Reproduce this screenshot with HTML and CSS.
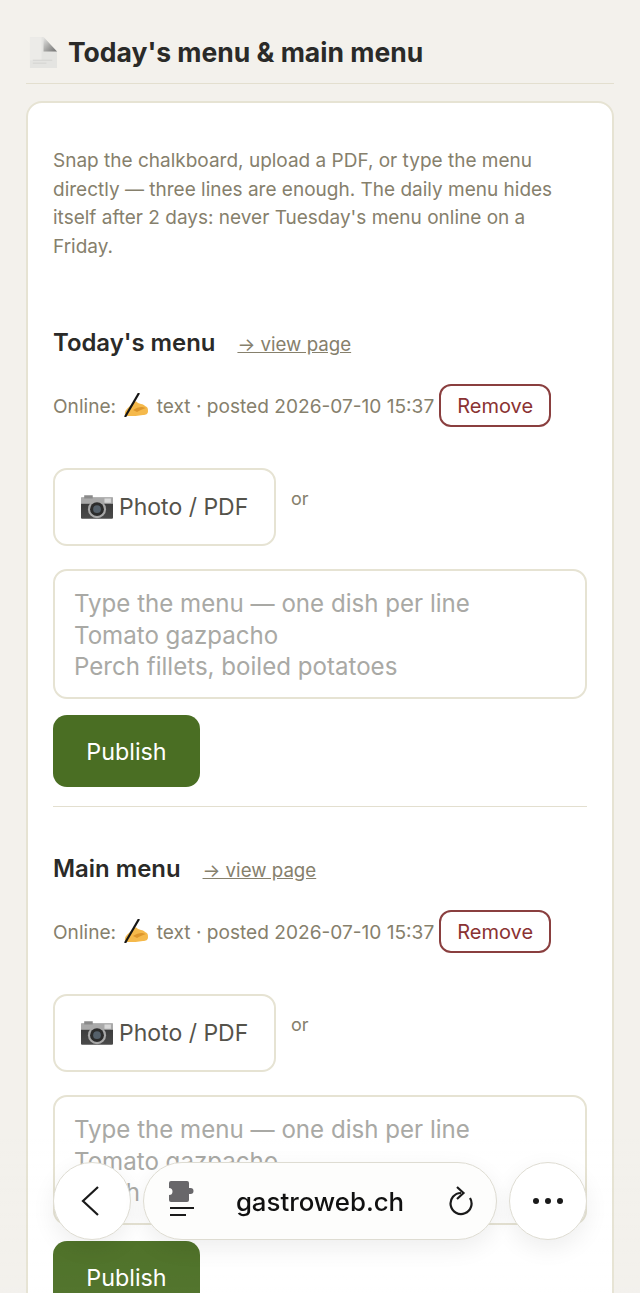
FILE: index.html
```html
<!DOCTYPE html>
<html lang="en">
<head>
  <meta charset="UTF-8">
  <meta name="viewport" content="width=device-width, initial-scale=1.0">
  <title>Today's menu &amp; main menu</title>
  <link rel="stylesheet" href="styles.css">
</head>
<body>

  <svg class="svg-defs" width="0" height="0" aria-hidden="true">
    <defs>
      <linearGradient id="cam-body" x1="0" y1="0" x2="0" y2="1">
        <stop offset="0" stop-color="#8b8b8b"/>
        <stop offset="0.3" stop-color="#3c3c3c"/>
        <stop offset="1" stop-color="#4a4a4a"/>
      </linearGradient>
      <symbol id="camera" viewBox="0 0 30 24">
        <rect x="0" y="3" width="30" height="20" rx="1" fill="url(#cam-body)"/>
        <rect x="0" y="3" width="30" height="6" fill="#a9a9a9"/>
        <rect x="3" y="1" width="8" height="3" fill="#8a8a8a"/>
        <rect x="22" y="4" width="6" height="4" fill="#d8d8d8"/>
        <circle cx="15" cy="14" r="8.5" fill="#a8a8a8"/>
        <circle cx="15" cy="14" r="6.5" fill="#2c2c2c"/>
        <circle cx="15" cy="14" r="3.6" fill="#55606a"/>
      </symbol>
      <symbol id="writing" viewBox="0 0 26 24">
        <path d="M2 20c0-3 3-5 5-7l4-4c2-1 3 0 4 1l3 1c2 0 3 1 4 2 3 1 3 3 3 5 0 3-2 4-5 4-5 1-10 1-14 1-3 0-5-1-4-3z" fill="#f5b94b"/>
        <path d="M10 17c3-2 6-3 9-3l4 1c-3 1-6 2-9 4z" fill="#dd962c"/>
        <path d="M16 0L2 24" stroke="#161616" stroke-width="2.200" fill="none"/>
      </symbol>
    </defs>
  </svg>

  <main class="page">
    <h1 class="page-title">
      <svg class="doc-icon" viewBox="0 0 30 34" aria-hidden="true">
        <defs>
          <linearGradient id="doc-fold" x1="0" y1="0" x2="1" y2="1">
            <stop offset="0" stop-color="#e8e8e6"/>
            <stop offset="0.55" stop-color="#a2a2a0"/>
            <stop offset="1" stop-color="#707070"/>
          </linearGradient>
        </defs>
        <path d="M1 1h14l14 15v17H1z" fill="#e4e4e1"/>
        <path d="M15 1l14 15H15z" fill="url(#doc-fold)"/>
        <path d="M1 1h12v24H1z" fill="#ecebe8"/>
        <path d="M4 28h14M4 25h20" stroke="#d2d2cf" stroke-width="1"/>
      </svg>
      Today's menu &amp; main menu
    </h1>

    <section class="card">
      <p class="intro">Snap the chalkboard, upload a PDF, or type the menu directly — three lines are enough. The daily menu hides itself after 2 days: never Tuesday's menu online on a Friday.</p>

      <div class="menu-block menu-block-first">
        <h2 class="menu-title">Today's menu <a class="view-link" href="#">→ view page</a></h2>
        <div class="status">
          <span>Online: <svg class="emoji-write"><use href="#writing"/></svg> text · posted 2026-07-10 15:37</span>
          <button type="button" class="btn-remove">Remove</button>
        </div>
        <div class="upload-row">
          <label class="btn-upload"><svg class="emoji-cam"><use href="#camera"/></svg> Photo / PDF</label>
          <span class="or">or</span>
        </div>
        <textarea class="menu-text" rows="3" placeholder="Type the menu — one dish per line&#10;Tomato gazpacho&#10;Perch fillets, boiled potatoes"></textarea>
        <button type="button" class="btn-publish">Publish</button>
      </div>

      <div class="menu-block">
        <h2 class="menu-title">Main menu <a class="view-link" href="#">→ view page</a></h2>
        <div class="status">
          <span>Online: <svg class="emoji-write"><use href="#writing"/></svg> text · posted 2026-07-10 15:37</span>
          <button type="button" class="btn-remove">Remove</button>
        </div>
        <div class="upload-row">
          <label class="btn-upload"><svg class="emoji-cam"><use href="#camera"/></svg> Photo / PDF</label>
          <span class="or">or</span>
        </div>
        <textarea class="menu-text" rows="3" placeholder="Type the menu — one dish per line&#10;Tomato gazpacho&#10;Perch fillets, boiled potatoes"></textarea>
        <button type="button" class="btn-publish">Publish</button>
      </div>
    </section>
  </main>

  <div class="fade"></div>

  <nav class="browser-bar">
    <button type="button" class="round-btn" aria-label="Back">
      <svg width="22" height="32" viewBox="0 0 22 32"><path d="M17 2L2 16l15 14" fill="none" stroke="#1a1a1a" stroke-width="2.200"/></svg>
    </button>
    <div class="url-pill">
      <svg class="reader-icon" width="28" height="40" viewBox="0 0 28 40" aria-hidden="true">
        <path d="M0 2a2 2 0 0 1 2-2h16a2 2 0 0 1 2 2v5h1.500a3 3 0 0 1 0 6H20v6a2 2 0 0 1-2 2H2a2 2 0 0 1-2-2v-5a3.500 3.500 0 0 0 0-7z" fill="#68676a"/>
        <path d="M1 27h24" stroke="#1a1a1a" stroke-width="2"/>
        <path d="M1 34h16" stroke="#1a1a1a" stroke-width="2"/>
      </svg>
      <span class="url-text">gastroweb.ch</span>
      <svg class="reload-icon" width="26" height="30" viewBox="0 0 26 30" aria-hidden="true">
        <path d="M12 7A10.500 10.500 0 1 0 21 12" fill="none" stroke="#1a1a1a" stroke-width="2.200"/>
        <path d="M8 1l6.500 6-6.500 6" fill="none" stroke="#1a1a1a" stroke-width="2.200"/>
      </svg>
    </div>
    <button type="button" class="round-btn" aria-label="More">
      <svg width="32" height="8" viewBox="0 0 32 8"><circle cx="4" cy="4" r="3" fill="#1a1a1a"/><circle cx="16" cy="4" r="3" fill="#1a1a1a"/><circle cx="28" cy="4" r="3" fill="#1a1a1a"/></svg>
    </button>
  </nav>

</body>
</html>
```

FILE: styles.css
```css
html, body {
  height: 1293px;
  overflow: hidden;
}

body {
  font-family: 'Inter', 'Liberation Sans', sans-serif;
  background-color: #f3f1ec;
  color: #2a2a28;
  margin: 0;
  padding: 0;
}

.svg-defs {
  display: block;
  height: 0;
}

.page {
  padding: 34px 26px 0;
}

.page-title {
  display: flex;
  align-items: center;
  gap: 10px;
  margin: 0 0 17px;
  padding: 0 0 12px 3px;
  font-size: 26.500px;
  line-height: 37px;
  font-weight: 700;
  border-bottom: 1px solid #e3dfcf;
}

.doc-icon {
  width: 29px;
  height: 33px;
  flex: none;
}

.card {
  background-color: #fff;
  border: 2px solid #e6e3d3;
  border-radius: 16px;
  padding: 44px 25px 60px;
}

.intro {
  margin: 0;
  max-width: 525px;
  font-size: 19px;
  line-height: 28.500px;
  color: #86806c;
}

.menu-block {
  margin-top: 48px;
}

.menu-block-first {
  margin-top: 68px;
  padding-bottom: 19px;
  border-bottom: 1px solid #e3dfcf;
}

.menu-title {
  display: flex;
  align-items: baseline;
  gap: 22px;
  margin: 0;
  font-size: 23.900px;
  line-height: 28px;
  font-weight: 600;
}

.view-link {
  font-size: 18.700px;
  font-weight: 400;
  color: #86806c;
}

.status {
  display: flex;
  align-items: center;
  gap: 5px;
  margin-top: 25px;
  font-size: 19.100px;
  color: #86806c;
  white-space: nowrap;
}

.emoji-write {
  width: 26px;
  height: 24px;
  vertical-align: -4px;
  margin: 0 2px;
}

.btn-remove {
  font-family: inherit;
  font-size: 20px;
  color: #8a3232;
  background-color: #fff;
  border: 2px solid #8a3f3f;
  border-radius: 12px;
  height: 43px;
  padding: 0 16px;
}

.upload-row {
  display: flex;
  align-items: flex-start;
  gap: 15px;
  margin-top: 41px;
}

.btn-upload {
  display: flex;
  align-items: center;
  gap: 6px;
  box-sizing: border-box;
  width: 223px;
  height: 78px;
  padding-left: 26px;
  font-size: 23px;
  color: #55534b;
  border: 2px solid #e6e3d3;
  border-radius: 14px;
}

.emoji-cam {
  width: 32px;
  height: 26px;
}

.or {
  margin-top: 20px;
  font-size: 18px;
  color: #86806c;
}

.menu-text {
  display: block;
  box-sizing: border-box;
  width: 100%;
  height: 130px;
  margin-top: 23px;
  padding: 17px 19px;
  font-family: inherit;
  font-size: 24.100px;
  line-height: 31.500px;
  border: 2px solid #e6e3d3;
  border-radius: 14px;
  resize: none;
  outline: none;
  overflow: hidden;
}

.menu-text::placeholder {
  color: #a9a9a5;
  opacity: 1;
}

.btn-publish {
  display: block;
  width: 147px;
  height: 72px;
  margin-top: 16px;
  font-family: inherit;
  font-size: 23.300px;
  color: #fff;
  background-color: #4a6e23;
  border: none;
  border-radius: 14px;
}

.fade {
  position: fixed;
  left: 0;
  right: 0;
  bottom: 0;
  height: 160px;
  background: linear-gradient(to bottom, rgba(255, 255, 255, 0), rgba(255, 255, 255, 0.05));
}

.browser-bar {
  position: fixed;
  left: 53px;
  right: 53px;
  top: 1162px;
  display: flex;
  gap: 12px;
}

.round-btn {
  flex: none;
  display: flex;
  align-items: center;
  justify-content: center;
  width: 78px;
  height: 78px;
  padding: 0;
  background-color: #fff;
  border: 1px solid #dedcd2;
  border-radius: 50%;
  box-shadow: 0 8px 24px rgba(0, 0, 0, 0.07);
}

.url-pill {
  flex: 1;
  display: flex;
  align-items: center;
  height: 78px;
  box-sizing: border-box;
  padding: 0 21px 0 25px;
  background-color: #fdfdfc;
  border: 1px solid #dedcd2;
  border-radius: 39px;
  box-shadow: 0 8px 24px rgba(0, 0, 0, 0.07);
}

.url-text {
  flex: 1;
  margin-right: 6px;
  text-align: center;
  font-size: 25.800px;
  font-weight: 500;
  color: #111;
}
```
